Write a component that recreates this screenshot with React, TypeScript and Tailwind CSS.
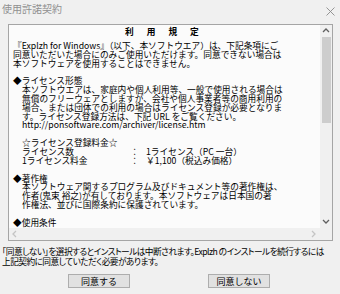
import React from 'react';

const jp = { fontFamily: '"Noto Sans CJK JP", sans-serif' };

const Chevron: React.FC<{ dir: 'up' | 'down' | 'left' | 'right'; color: string }> = ({ dir, color }) => {
  const pts = {
    up: '1,5 4,2 7,5',
    down: '1,2 4,5 7,2',
    left: '5,1 2,4 5,7',
    right: '2,1 5,4 2,7',
  }[dir];
  return (
    <svg width="8" height="8" viewBox="0 0 8 8">
      <polyline points={pts} fill="none" stroke={color} strokeWidth="1.3" />
    </svg>
  );
};

const Line: React.FC<{ indent?: boolean; children?: React.ReactNode }> = ({ indent, children }) => (
  <div className={`h-[8.85px] whitespace-nowrap ${indent ? 'pl-[9px]' : ''}`}>{children}</div>
);

const Blank = () => <div className="h-[8.85px]" />;

export default function App() {
  return (
    <div className="w-[340px] h-[294px] bg-[#f0f0f0] overflow-hidden flex flex-col" style={jp}>
      {/* Title bar */}
      <div className="h-[18px] flex items-center justify-between pl-[2px] pr-[5px]">
        <span className="text-[10px] leading-none text-[#8f8f8f]">使用許諾契約</span>
        <svg width="9" height="9" viewBox="0 0 9 9" className="mt-[4px]">
          <path d="M0.5 0.5 L8.5 8.5 M8.5 0.5 L0.5 8.5" stroke="#8a8a8a" strokeWidth="0.9" />
        </svg>
      </div>

      {/* License text box */}
      <div className="ml-[8px] mr-[7px] mt-[6px] h-[217px] border border-[#a5a5a5] bg-[#fbfbfb] grid grid-cols-[1fr_12px] grid-rows-[1fr_12px]">
        <div className="overflow-hidden pl-[4px] text-[8.7px] leading-[8.85px] text-black">
          <div className="flex gap-[13px] pl-[112px] mt-[3px] mb-[5px] font-bold">
            <span>利</span>
            <span>用</span>
            <span>規</span>
            <span>定</span>
          </div>
          <Line>『Explzh for Windows』（以下、本ソフトウエア）は、下記条項にご</Line>
          <Line>同意いただいた場合にのみご使用いただけます。同意できない場合は</Line>
          <Line>本ソフトウェアを使用することはできません。</Line>
          <Blank />
          <Line>◆ライセンス形態</Line>
          <Line indent>本ソフトウエアは、家庭内や個人利用等、一般で使用される場合は</Line>
          <Line indent>無償のフリーウェアとしますが、会社や個人事業者等の商用利用の</Line>
          <Line indent>場合、または団体での利用の場合はライセンス登録が必要となりま</Line>
          <Line indent>す。ライセンス登録方法は、下記 URL をご覧ください。</Line>
          <Line indent>http://ponsoftware.com/archiver/license.htm</Line>
          <Blank />
          <Line indent>☆ライセンス登録料金☆</Line>
          <Line indent>
            <div className="flex">
              <span className="w-[108px]">ライセンス数</span>
              <span className="w-[9px] text-center">：</span>
              <span className="ml-[7px]">1ライセンス（PC 一台）</span>
            </div>
          </Line>
          <Line indent>
            <div className="flex">
              <span className="w-[108px]">1ライセンス料金</span>
              <span className="w-[9px] text-center">：</span>
              <span className="ml-[7px]">￥1,100（税込み価格）</span>
            </div>
          </Line>
          <Blank />
          <Line>◆著作権</Line>
          <Line indent>本ソフトウェア関するプログラム及びドキュメント等の著作権は、</Line>
          <Line indent>作者(鬼束 裕之)が有しております。本ソフトウェアは日本国の著</Line>
          <Line indent>作権法、並びに国際条約に保護されています。</Line>
          <Blank />
          <Line>◆使用条件</Line>
        </div>

        {/* Vertical scrollbar */}
        <div className="bg-[#f0f0f0] flex flex-col items-center">
          <div className="h-[12px] flex items-center justify-center">
            <Chevron dir="up" color="#606060" />
          </div>
          <div className="w-[9px] h-[86px] bg-[#cdcdcd]" />
          <div className="flex-1" />
          <div className="h-[12px] flex items-center justify-center">
            <Chevron dir="down" color="#606060" />
          </div>
        </div>

        {/* Horizontal scrollbar */}
        <div className="bg-[#f0f0f0] flex items-center justify-between">
          <div className="w-[12px] flex justify-center">
            <Chevron dir="left" color="#c4c4c4" />
          </div>
          <div className="w-[12px] flex justify-center">
            <Chevron dir="right" color="#c4c4c4" />
          </div>
        </div>
        <div className="bg-[#f0f0f0]" />
      </div>

      {/* Notice */}
      <div className="mt-[6px] pl-[2px] text-[8.7px] leading-[10px] tracking-[-0.55px] text-black whitespace-nowrap [font-feature-settings:'palt']">
        <div>「同意しない」を選択するとインストールは中断されます。Explzh のインストールを続行するには</div>
        <div>上記契約に同意していただく必要があります。</div>
      </div>

      {/* Buttons */}
      <div className="mt-[7px] flex pl-[68px] gap-[78px]">
        <button className="w-[62px] h-[14px] bg-[#e1e1e1] border border-[#adadad] text-[9px] leading-none text-black">
          同意する
        </button>
        <button className="w-[62px] h-[14px] bg-[#e1e1e1] border border-[#adadad] text-[9px] leading-none text-black">
          同意しない
        </button>
      </div>
    </div>
  );
}
